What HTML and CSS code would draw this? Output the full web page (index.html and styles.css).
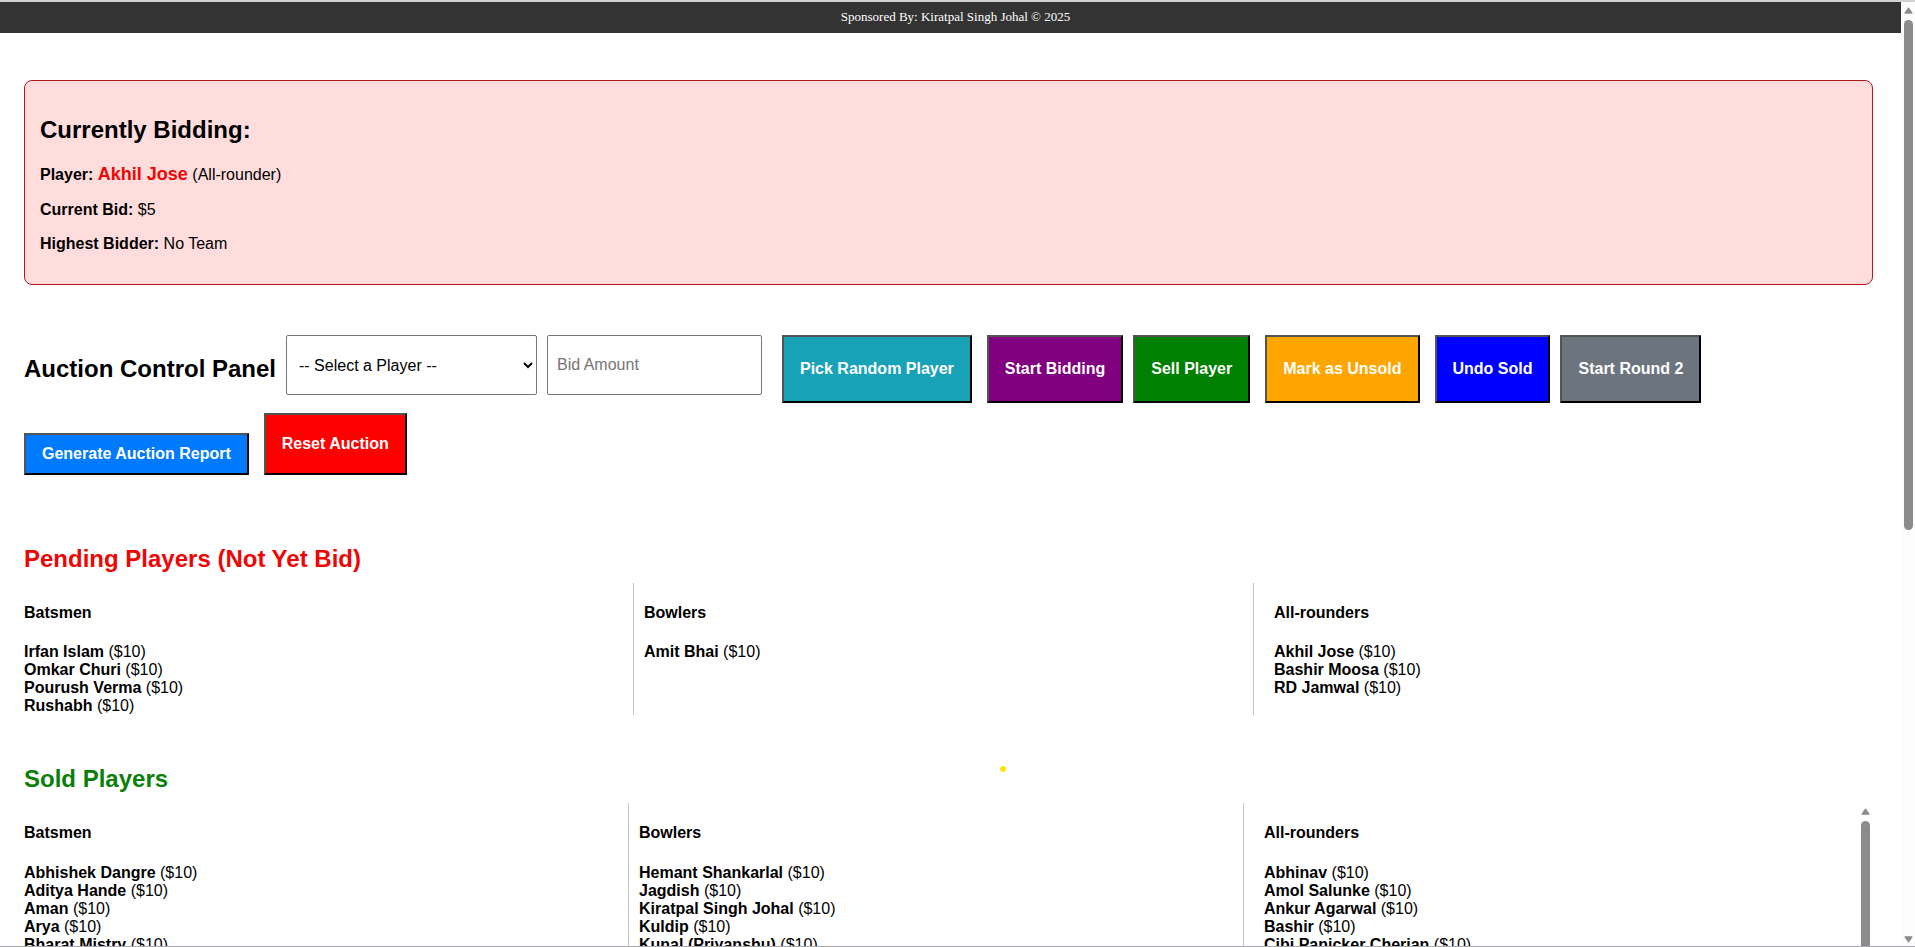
FILE: index.html
```html
<!DOCTYPE html>
<html lang="en">
<head>
<meta charset="utf-8">
<title>Player Auction</title>
<link rel="stylesheet" href="styles.css">
</head>
<body>
<div class="window">
  <div class="page">
    <header class="sponsor">Sponsored By: Kiratpal Singh Johal © 2025</header>
    <main class="content">
      <section class="bidding">
        <h2 class="title">Currently Bidding:</h2>
        <p class="line"><strong>Player:</strong> <strong class="player">Akhil Jose</strong> (All-rounder)</p>
        <p class="line"><strong>Current Bid:</strong> $5</p>
        <p class="line"><strong>Highest Bidder:</strong> No Team</p>
      </section>

      <section class="controls">
        <h2 class="title panel-title">Auction Control Panel</h2>
        <select class="field select" aria-label="Select a player"><option>-- Select a Player --</option></select>
        <input class="field amount" type="text" placeholder="Bid Amount" aria-label="Bid amount">
        <button class="btn teal">Pick Random Player</button>
        <button class="btn purple">Start Bidding</button>
        <button class="btn green">Sell Player</button>
        <button class="btn orange">Mark as Unsold</button>
        <button class="btn blue">Undo Sold</button>
        <button class="btn gray">Start Round 2</button>
        <button class="btn report">Generate Auction Report</button>
        <button class="btn reset">Reset Auction</button>
      </section>

      <section class="pending">
        <h2 class="title pending-title">Pending Players (Not Yet Bid)</h2>
        <div class="columns">
          <div class="column first">
            <h4 class="role">Batsmen</h4>
            <ul class="players">
              <li><strong>Irfan Islam</strong> ($10)</li>
              <li><strong>Omkar Churi</strong> ($10)</li>
              <li><strong>Pourush Verma</strong> ($10)</li>
              <li><strong>Rushabh</strong> ($10)</li>
            </ul>
          </div>
          <div class="column middle">
            <h4 class="role">Bowlers</h4>
            <ul class="players">
              <li><strong>Amit Bhai</strong> ($10)</li>
            </ul>
          </div>
          <div class="column last">
            <h4 class="role">All-rounders</h4>
            <ul class="players">
              <li><strong>Akhil Jose</strong> ($10)</li>
              <li><strong>Bashir Moosa</strong> ($10)</li>
              <li><strong>RD Jamwal</strong> ($10)</li>
            </ul>
          </div>
        </div>
      </section>

      <section class="sold">
        <h2 class="title sold-title">Sold Players</h2>
        <div class="columns sold-columns">
          <div class="column first">
            <h4 class="role">Batsmen</h4>
            <ul class="players">
              <li><strong>Abhishek Dangre</strong> ($10)</li>
              <li><strong>Aditya Hande</strong> ($10)</li>
              <li><strong>Aman</strong> ($10)</li>
              <li><strong>Arya</strong> ($10)</li>
              <li><strong>Bharat Mistry</strong> ($10)</li>
            </ul>
          </div>
          <div class="column middle">
            <h4 class="role">Bowlers</h4>
            <ul class="players">
              <li><strong>Hemant Shankarlal</strong> ($10)</li>
              <li><strong>Jagdish</strong> ($10)</li>
              <li><strong>Kiratpal Singh Johal</strong> ($10)</li>
              <li><strong>Kuldip</strong> ($10)</li>
              <li><strong>Kunal (Priyanshu)</strong> ($10)</li>
            </ul>
          </div>
          <div class="column last">
            <h4 class="role">All-rounders</h4>
            <ul class="players">
              <li><strong>Abhinav</strong> ($10)</li>
              <li><strong>Amol Salunke</strong> ($10)</li>
              <li><strong>Ankur Agarwal</strong> ($10)</li>
              <li><strong>Bashir</strong> ($10)</li>
              <li><strong>Cibi Panicker Cherian</strong> ($10)</li>
            </ul>
          </div>
          <div class="scrollbar">
            <svg class="arrow" viewBox="0 0 9 7"><path d="M4.5 0.8 8.2 6.2H0.8Z"/></svg>
            <div class="thumb list-thumb"></div>
          </div>
        </div>
      </section>
    </main>
  </div>
  <div class="scrollbar page-scrollbar">
    <svg class="arrow" viewBox="0 0 9 7"><path d="M4.5 0.8 8.2 6.2H0.8Z"/></svg>
    <div class="track"><div class="thumb page-thumb"></div></div>
    <svg class="arrow" viewBox="0 0 9 7"><path d="M4.5 6.2 8.2 0.8H0.8Z"/></svg>
  </div>
  <div class="pointer"></div>
</div>
</body>
</html>
```

FILE: styles.css
```css
* {
  box-sizing: border-box;
}

body {
  margin: 0;
  background: #fff;
  color: #000;
  font: 16px/18px "Liberation Sans", Arial, sans-serif;
}

.window {
  position: relative;
  display: flex;
  height: 100vh;
  overflow: hidden;
  border-top: 2px solid #d0d3d3;
  border-bottom: 1px solid #a9a9ad;
}

.page {
  flex: 1;
  min-width: 0;
  display: flex;
  flex-direction: column;
}

.sponsor {
  padding: 7px 0 9px 10px;
  background: #333;
  color: #fff;
  font: 13px/15px "Liberation Serif", "Times New Roman", serif;
  text-align: center;
}

.content {
  flex: 1;
  min-height: 0;
  display: flex;
  flex-direction: column;
  padding: 47px 28px 0 24px;
}

.title {
  margin: 0;
  font-size: 24px;
  line-height: 28px;
}

.bidding {
  margin-bottom: 50px;
  padding: 35px 15px 31px;
  border: 1px solid #b8181c;
  border-radius: 8px;
  background: #fdd;
}

.line {
  margin: 16px 0 0;
}

.title + .line {
  margin-top: 20px;
  line-height: 20px;
}

.player {
  color: #f00505;
  font-size: 18px;
}

.controls {
  display: flex;
  flex-wrap: wrap;
  align-items: flex-end;
  gap: 10px;
  margin-bottom: 70px;
}

.panel-title {
  align-self: center;
}

.field {
  height: 60px;
  margin: 0;
  align-self: flex-start;
  border: 1px solid #767676;
  border-radius: 2px;
  background: #fff;
  color: #000;
  font: inherit;
}

.select {
  width: 251px;
  padding: 0 8px;
}

.amount {
  width: 215px;
  margin-right: 10px;
  padding: 0 9px;
}

.btn {
  height: 68px;
  padding: 0 16px;
  border: 2px outset #000;
  border-radius: 0;
  color: #fff;
  font: bold 16px/18px "Liberation Sans", Arial, sans-serif;
}

.teal {
  margin-right: 5px;
  background: #17a2b8;
}

.purple {
  background: #800080;
}

.green {
  margin-right: 5px;
  background: #008000;
}

.orange {
  margin-right: 5px;
  background: #ffa500;
}

.blue {
  background: #00f;
}

.gray {
  background: #6c757d;
}

.report {
  height: 42px;
  margin-right: 5px;
  background: #007bff;
}

.reset {
  height: 62px;
  background: #f00;
}

.pending {
  margin-bottom: 50px;
}

.pending-title {
  color: #f00505;
}

.sold-title {
  color: #0a800a;
}

.columns {
  display: flex;
  margin-top: 10px;
}

.column {
  flex: 1 1 0;
  box-sizing: content-box;
  min-width: 0;
}

.first {
  padding-right: 10px;
  border-right: 1px solid #c4c4c4;
}

.middle {
  padding: 0 10px;
  border-right: 1px solid #c4c4c4;
}

.last {
  padding-left: 20px;
}

.role {
  margin: 21px 0;
  font-size: 16px;
}

.players {
  margin: 0;
  padding: 0;
  list-style: none;
}

.sold {
  flex: 1;
  min-height: 0;
  display: flex;
  flex-direction: column;
}

.sold-columns {
  flex: 1;
  min-height: 0;
  overflow: hidden;
}

.sold-columns .role {
  margin-bottom: 22px;
}

.scrollbar {
  flex: none;
  display: flex;
  flex-direction: column;
  align-items: center;
  gap: 6px;
  width: 15px;
  padding-top: 5px;
}

.page-scrollbar {
  width: 14px;
  padding-bottom: 3px;
  padding-left: 1px;
  background: #fcfcfc;
}

.arrow {
  flex: none;
  width: 9px;
  height: 7px;
  fill: #8b8b8b;
  stroke: #8b8b8b;
  stroke-linejoin: round;
}

.track {
  flex: 1;
}

.thumb {
  width: 9px;
  background: #8b8b8b;
}

.list-thumb {
  flex: 1;
  border-radius: 5px 5px 0 0;
}

.page-thumb {
  height: 56%;
  border-radius: 5px;
}

/* Laser-pointer dot floating over the page */
.pointer {
  position: absolute;
  top: 764px;
  left: 1000px;
  width: 6px;
  height: 6px;
  border-radius: 50%;
  background: #fbe50a;
}
```
